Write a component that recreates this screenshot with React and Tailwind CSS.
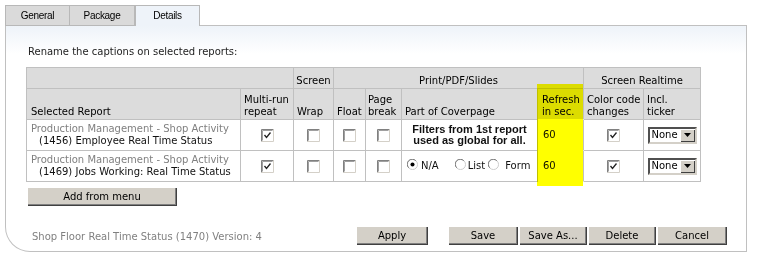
import React from 'react';

const ui = "font-['DejaVu_Sans',Verdana,sans-serif] text-[10px] leading-[12px]";
const head = 'border-r border-b border-[#c0c0c0] bg-[#dcdcdc] text-black';
const cell = 'border-r border-b border-[#c0c0c0] bg-white';
const btn =
  'flex h-[19px] items-center justify-center bg-[#d4d0c8] text-black shadow-[inset_1px_1px_0_#ffffff,inset_-1px_-1px_0_#404040,inset_-2px_-2px_0_#808080]';

function Check({ checked }) {
  return (
    <svg width="13" height="13" viewBox="0 0 13 13" className="block">
      <rect x="0" y="0" width="13" height="13" fill="#ffffff" />
      <path d="M0.5 12.5V0.5H12.5" stroke="#808080" fill="none" />
      <path d="M12.5 0.5V12.5H0.5" stroke="#d4d0c8" fill="none" />
      <path d="M1.5 11.5V1.5H11.5" stroke="#a0a0a0" fill="none" />
      {checked && <path d="M3.5 6 L5.5 8.5 L9.5 3.5" stroke="#202020" strokeWidth="1.3" fill="none" />}
    </svg>
  );
}

function Radio({ checked }) {
  return (
    <svg width="11" height="11" viewBox="0 0 12 12" className="block">
      <circle cx="6" cy="6" r="5.5" fill="#ffffff" stroke="#c8c8c8" />
      <path d="M1.8 9.5 A5 5 0 0 1 9.5 1.8" stroke="#707070" fill="none" />
      {checked && <circle cx="6" cy="6" r="2.2" fill="#000000" />}
    </svg>
  );
}

function Select() {
  return (
    <div className="flex h-[17px] w-[49px] items-center border-2 border-t-[#505050] border-l-[#505050] border-b-[#d4d0c8] border-r-[#d4d0c8] bg-white">
      <span className="flex-1 pl-[2px] text-[10px] leading-none text-black">None</span>
      <div className="flex h-[13px] w-[15px] items-center justify-center bg-[#d4d0c8] shadow-[inset_1px_1px_0_#ffffff,inset_-1px_-1px_0_#404040]">
        <svg width="7" height="4" viewBox="0 0 7 4">
          <path d="M0 0H7L3.5 4Z" fill="#000000" />
        </svg>
      </div>
    </div>
  );
}

const rows = [
  { id: '(1456) Employee Real Time Status', first: true },
  { id: '(1469) Jobs Working: Real Time Status', first: false },
];

export default function App() {
  return (
    <div className={`h-[265px] w-[764px] overflow-hidden bg-white pl-[5px] pt-[5px] ${ui}`}>
      {/* tabs */}
      <div className="flex h-[21px] w-[742px] font-['Liberation_Sans',Tahoma,sans-serif] tracking-[-0.3px]">
        <div className="flex w-[65px] items-center justify-center border border-[#b8b8b8] bg-[#dadada] text-black">General</div>
        <div className="flex w-[65px] items-center justify-center border border-l-0 border-[#b8b8b8] bg-[#dadada] text-black">Package</div>
        <div className="flex w-[65px] items-center justify-center border border-b-0 border-[#b8b8b8] bg-[#eef3f9] text-black">Details</div>
        <div className="flex-1 border-b border-[#c0c0c0]" />
      </div>

      {/* panel */}
      <div className="w-[742px] rounded-bl-[25px] border-x border-b border-[#c0c0c0] bg-[linear-gradient(to_bottom,#eef3f9,#ffffff_28px)] pb-[6px] pl-[20px] pt-[20px]">
        <div className="ml-[2px] h-[12px] text-[#222]">Rename the captions on selected reports:</div>

        <div className="relative mt-[9px] w-[675px]">
          <div className="grid grid-cols-[214px_53px_40px_32px_36px_136px_46px_60px_57px] grid-rows-[21px_31px_31px_31px] border-l border-t border-[#c0c0c0]">
            {/* header row 1 */}
            <div className={`col-span-2 ${head}`} />
            <div className={`flex items-end justify-center pb-[1px] ${head}`}>Screen</div>
            <div className={`col-span-4 flex items-end justify-center pb-[1px] ${head}`}>Print/PDF/Slides</div>
            <div className={`col-span-2 flex items-end justify-center pb-[1px] ${head}`}>Screen Realtime</div>

            {/* header row 2 */}
            <div className={`flex items-end pb-[1px] pl-[4px] ${head}`}>Selected Report</div>
            <div className={`flex items-end pb-[1px] pl-[3px] ${head}`}>Multi-run<br />repeat</div>
            <div className={`flex items-end pb-[1px] pl-[3px] ${head}`}>Wrap</div>
            <div className={`flex items-end pb-[1px] pl-[3px] ${head}`}>Float</div>
            <div className={`flex items-end pb-[1px] pl-[2px] ${head}`}>Page<br />break</div>
            <div className={`flex items-end pb-[1px] pl-[3px] ${head}`}>Part of Coverpage</div>
            <div className={`flex items-end pb-[1px] pl-[4px] ${head} border-b-white`}>Refresh<br />in sec.</div>
            <div className={`flex items-end pb-[1px] pl-[3px] ${head}`}>Color code<br />changes</div>
            <div className={`flex items-end pb-[1px] pl-[3px] ${head}`}>Incl.<br />ticker</div>

            {/* data rows */}
            {rows.map((r) => (
              <React.Fragment key={r.id}>
                <div className={`flex flex-col justify-center pl-[4px] ${cell}`}>
                  <span className="text-[#808080]">Production Management - Shop Activity</span>
                  <span className="pl-[8px] text-[#111]">{r.id}</span>
                </div>
                <div className={`flex items-center justify-center ${cell}`}><Check checked /></div>
                <div className={`flex items-center justify-center ${cell}`}><Check /></div>
                <div className={`flex items-center justify-center ${cell}`}><Check /></div>
                <div className={`flex items-center justify-center ${cell}`}><Check /></div>
                {r.first ? (
                  <div className={`flex flex-col items-center justify-center font-['Liberation_Sans',Tahoma,sans-serif] text-[11px] font-bold leading-[11px] text-[#111] ${cell}`}>
                    <span>Filters from 1st report</span>
                    <span>used as global for all.</span>
                  </div>
                ) : (
                  <div className={`flex items-center pl-[5px] text-[#111] ${cell}`}>
                    <span className="-mt-[3px]"><Radio checked /></span>
                    <span className="ml-[3px]">N/A</span>
                    <span className="-mt-[3px] ml-[16px]"><Radio /></span>
                    <span className="ml-[2px]">List</span>
                    <span className="-mt-[3px] ml-[3px]"><Radio /></span>
                    <span className="ml-[6px]">Form</span>
                  </div>
                )}
                <div className={`flex items-center pl-[5px] text-[#111] ${cell} border-b-white`}>60</div>
                <div className={`flex items-center justify-center ${cell}`}><Check checked /></div>
                <div className={`flex items-center justify-center ${cell}`}><Select /></div>
              </React.Fragment>
            ))}
          </div>
          {/* highlighter over the refresh column */}
          <div className="pointer-events-none absolute left-[511px] top-[17px] h-[102px] w-[46px] bg-[#ffff00] mix-blend-multiply" />
        </div>

        <div className={`ml-[1px] mt-[5px] w-[150px] ${btn}`}>Add from menu</div>

        <div className="mt-[20px] flex items-center pr-[19px]">
          <div className="ml-[6px] flex-1 pt-[2px] text-[#808080]">Shop Floor Real Time Status (1470) Version: 4</div>
          <div className={`w-[72px] ${btn}`}>Apply</div>
          <div className="ml-[20px] flex gap-[1px]">
            <div className={`w-[70px] ${btn}`}>Save</div>
            <div className={`w-[68px] ${btn}`}>Save As...</div>
            <div className={`w-[68px] ${btn}`}>Delete</div>
            <div className={`w-[70px] ${btn}`}>Cancel</div>
          </div>
        </div>
      </div>
    </div>
  );
}
